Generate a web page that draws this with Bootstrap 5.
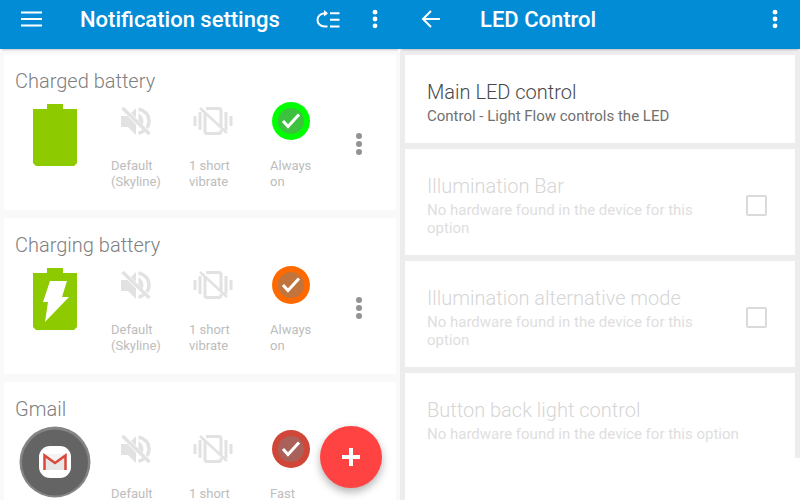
<!DOCTYPE html>
<html lang="en">
<head>
<meta charset="utf-8">
<meta name="viewport" content="width=device-width, initial-scale=1">
<title>Notification settings</title>
<link rel="stylesheet" href="https://cdn.jsdelivr.net/npm/bootstrap@5.3.0/dist/css/bootstrap.min.css">
<style>
body { font-family: Roboto, "Liberation Sans", sans-serif; background: #fff; }
svg { display: block; }
.pane { height: 100vh; }
.pane-left { background: #f9f9f9; }
.app-bar { background: #038cd6; color: #fff; height: 49px; padding: 0 22px 12px 20px; box-shadow: 0 3px 2px -2px rgba(0,0,0,.2); position: relative; }
.app-title { font-size: 22px; font-weight: 500; line-height: 26px; margin: 2px 0 0; }
.plain-btn { background: none; border: 0; padding: 0; color: inherit; text-align: left; }
.lead-btn { width: 60px; }
.item-title { font-size: 20px; font-weight: 300; line-height: 26px; margin: 0; }
.notify-list { padding: 5px 4px 0; gap: 8px; }
.notify-card { border: 0; border-radius: 0; padding: 14px 0 20px 11px; }
.notify-card .item-title { color: #808080; }
.notify-grid { display: grid; grid-template-columns: 96fr 78fr 81fr 71fr 55fr; margin-top: 4px; }
.app-icon { height: 72px; padding-right: 16px; }
.state-icon { height: 46px; }
.check-icon { padding-left: 2px; }
.mute-icon { padding-left: 10px; }
.state-label { display: block; max-width: 52px; min-height: 32px; margin-top: 14px; font-size: 13px; line-height: 16px; color: #bdbdbd; }
.gray-icon { color: #e2e2e2; }
.more-icon { color: #939393; padding-left: 14px; }
.fab { right: 18px; bottom: 12px; width: 62px; height: 62px; background: #ff4343; border: 0; padding: 0; box-shadow: 0 4px 8px rgba(0,0,0,.3); }
.pane-right { background: #fff; }
.pane-body { border-left: 5px solid #ededed; }
.option-list { background: #ededed; padding: 6px 5px 0 0; gap: 6px; }
.option-card { border: 0; border-radius: 0; padding: 24px 28px 18px 22px; color: #d6d6d6; }
.option-card.active { color: #484848; }
.option-card:last-child { padding-bottom: 15px; }
.option-sub { display: block; font-size: 15px; line-height: 18px; margin-top: 2px; color: #dedede; }
.active .option-sub { color: #707070; }
.box { appearance: none; width: 21px; height: 21px; border: 2px solid #dadada; border-radius: 2px; background: #fff; margin: 0 0 0 24px; flex: none; }
</style>
<script src="https://cdn.jsdelivr.net/npm/bootstrap@5.3.0/dist/js/bootstrap.bundle.min.js"></script>
</head>
<body>
<svg width="0" height="0" class="position-absolute" aria-hidden="true">
  <defs>
    <symbol id="mute" viewBox="0 0 30 30">
      <path fill="currentColor" d="M0 10H6.500L15 18.500V29L7 21H0ZM15 2V12L10 7Z"/>
      <path fill="currentColor" d="M17.500 7Q24 11 22 19L17.500 14.500Z"/>
      <g fill="none" stroke="currentColor" stroke-width="3.500">
        <path d="M17.500 3C25 5 28 10 28 15Q28 19 26 22M17.500 27.200Q20.500 26.500 23 24.500"/>
        <path d="M1.500 2L28.500 28"/>
      </g>
    </symbol>
    <symbol id="vibrate" viewBox="0 0 40 30">
      <g fill="none" stroke="currentColor">
        <path stroke-width="3" d="M2 10V20M7 6V24M33 6V24M38 10V20"/>
        <path stroke-width="3" stroke-linejoin="round" d="M13 2.500H26Q28 2.500 28 4.500V21M12 7V25.500Q12 27.500 14 27.500H26Q28 27.500 28 24"/>
        <path stroke-width="2.500" d="M7 2L34 27"/>
      </g>
    </symbol>
    <symbol id="check" viewBox="0 0 38 38">
      <circle cx="19" cy="19" r="19" fill="currentColor"/>
      <circle cx="19" cy="19" r="13" fill="#7f7f7f" fill-opacity=".48"/>
      <path d="M11 19L16 24.500L27 12.500" fill="none" stroke="#fff" stroke-width="3"/>
    </symbol>
    <symbol id="more" viewBox="0 0 8 24">
      <g fill="currentColor"><circle cx="4" cy="4" r="3"/><circle cx="4" cy="12" r="3"/><circle cx="4" cy="20" r="3"/></g>
    </symbol>
    <symbol id="dots" viewBox="0 0 6 20">
      <g fill="currentColor"><circle cx="3" cy="3.200" r="2.400"/><circle cx="3" cy="10" r="2.400"/><circle cx="3" cy="16.800" r="2.400"/></g>
    </symbol>
    <path id="battery" fill="#8dca00" d="M15 1H31V6H45V60L42 63H4L1 60V6H15Z"/>
  </defs>
</svg>
<div class="container-fluid p-0">
<div class="row g-0">
  <section class="col-6 pane pane-left position-relative overflow-hidden">
    <header class="app-bar d-flex align-items-center">
      <button class="plain-btn lead-btn" aria-label="Menu"><svg width="22" height="18" viewBox="0 0 22 18"><path d="M1 2.500H22M1 9H22M1 15.500H22" stroke="#fff" stroke-width="2"/></svg></button>
      <h1 class="app-title flex-fill text-nowrap">Notification settings</h1>
      <button class="plain-btn me-4" aria-label="Reorder"><svg width="24" height="18" viewBox="0 0 24 18"><g fill="none" stroke="#fff" stroke-width="2"><path d="M11 3.200H9C-1 3.500-1 16.500 9 16.500H11.500M14 3.200H23.500M14 9.800H23.500M14 16.500H23.500" /></g><path d="M8 0L12 3.200L8 6.500Z" fill="#fff"/></svg></button>
      <button class="plain-btn ms-2" aria-label="More options"><svg width="6" height="20"><use href="#dots"/></svg></button>
    </header>
    <main class="notify-list d-flex flex-column">
      <article class="card notify-card">
        <h2 class="item-title">Charged battery</h2>
        <div class="notify-grid align-items-start">
          <div class="app-icon d-flex align-items-center justify-content-center"><svg width="46" height="66" viewBox="0 -2 46 66"><use href="#battery"/></svg></div>
          <button class="plain-btn"><span class="state-icon gray-icon mute-icon d-flex align-items-center"><svg width="30" height="30"><use href="#mute"/></svg></span><span class="state-label">Default (Skyline)</span></button>
          <button class="plain-btn"><span class="state-icon gray-icon d-flex align-items-center ps-1"><svg width="40" height="30"><use href="#vibrate"/></svg></span><span class="state-label">1 short vibrate</span></button>
          <button class="plain-btn"><span class="state-icon check-icon d-flex align-items-center" style="color:#00ff00"><svg width="38" height="38"><use href="#check"/></svg></span><span class="state-label">Always on</span></button>
          <button class="plain-btn more-icon align-self-center" aria-label="More"><svg width="8" height="24"><use href="#more"/></svg></button>
        </div>
      </article>
      <article class="card notify-card">
        <h2 class="item-title">Charging battery</h2>
        <div class="notify-grid align-items-start">
          <div class="app-icon d-flex align-items-center justify-content-center"><svg width="46" height="66" viewBox="0 -2 46 66"><use href="#battery"/><path d="M18 14H35L30 30H37L13 55L16 35H11Z" fill="#fff"/></svg></div>
          <button class="plain-btn"><span class="state-icon gray-icon mute-icon d-flex align-items-center"><svg width="30" height="30"><use href="#mute"/></svg></span><span class="state-label">Default (Skyline)</span></button>
          <button class="plain-btn"><span class="state-icon gray-icon d-flex align-items-center ps-1"><svg width="40" height="30"><use href="#vibrate"/></svg></span><span class="state-label">1 short vibrate</span></button>
          <button class="plain-btn"><span class="state-icon check-icon d-flex align-items-center" style="color:#ff6a00"><svg width="38" height="38"><use href="#check"/></svg></span><span class="state-label">Always on</span></button>
          <button class="plain-btn more-icon align-self-center" aria-label="More"><svg width="8" height="24"><use href="#more"/></svg></button>
        </div>
      </article>
      <article class="card notify-card">
        <h2 class="item-title">Gmail</h2>
        <div class="notify-grid align-items-start">
          <div class="app-icon d-flex align-items-center justify-content-center"><svg width="72" height="72" viewBox="0 0 72 72"><circle cx="36" cy="36" r="35.500" fill="#858585"/><circle cx="36" cy="36.500" r="33" fill="#646464"/><rect x="20" y="20" width="32" height="32" rx="11" fill="#fff"/><path d="M25 28H47V44H25Z" fill="#e6e6e6"/><path d="M25 28H47L36 37Z" fill="#f3f3f3"/><path d="M25.500 44V29.500L36 37L46.500 29.500V44" fill="none" stroke="#d9483b" stroke-width="2.500"/></svg></div>
          <button class="plain-btn"><span class="state-icon gray-icon mute-icon d-flex align-items-center"><svg width="30" height="30"><use href="#mute"/></svg></span><span class="state-label">Default</span></button>
          <button class="plain-btn"><span class="state-icon gray-icon d-flex align-items-center ps-1"><svg width="40" height="30"><use href="#vibrate"/></svg></span><span class="state-label">1 short</span></button>
          <button class="plain-btn"><span class="state-icon check-icon d-flex align-items-center" style="color:#d04638"><svg width="38" height="38"><use href="#check"/></svg></span><span class="state-label">Fast</span></button>
        </div>
      </article>
    </main>
    <button class="fab position-absolute rounded-circle d-flex align-items-center justify-content-center" aria-label="Add"><svg width="18" height="18"><path d="M9 0V18M0 9H18" stroke="#fff" stroke-width="4"/></svg></button>
  </section>

  <section class="col-6 pane pane-right d-flex flex-column">
    <header class="app-bar d-flex align-items-center">
      <button class="plain-btn lead-btn" aria-label="Back"><svg width="22" height="20" viewBox="0 0 22 20"><path d="M20 10H3M11 2L3 10L11 18" fill="none" stroke="#fff" stroke-width="2"/></svg></button>
      <h1 class="app-title flex-fill">LED Control</h1>
      <button class="plain-btn" aria-label="More options"><svg width="6" height="20"><use href="#dots"/></svg></button>
    </header>
    <main class="pane-body flex-fill">
      <div class="option-list d-flex flex-column">
        <div class="card option-card active">
          <h2 class="item-title">Main LED control</h2>
          <span class="option-sub">Control - Light Flow controls the LED</span>
        </div>
        <div class="card option-card flex-row align-items-center">
          <label class="flex-fill" for="bar"><span class="item-title d-block">Illumination Bar</span><span class="option-sub">No hardware found in the device for this option</span></label>
          <input class="box" type="checkbox" id="bar">
        </div>
        <div class="card option-card flex-row align-items-center">
          <label class="flex-fill" for="alt"><span class="item-title d-block">Illumination alternative mode</span><span class="option-sub">No hardware found in the device for this option</span></label>
          <input class="box" type="checkbox" id="alt">
        </div>
        <div class="card option-card">
          <h2 class="item-title">Button back light control</h2>
          <span class="option-sub">No hardware found in the device for this option</span>
        </div>
      </div>
    </main>
  </section>
</div>
</div>
</body>
</html>
